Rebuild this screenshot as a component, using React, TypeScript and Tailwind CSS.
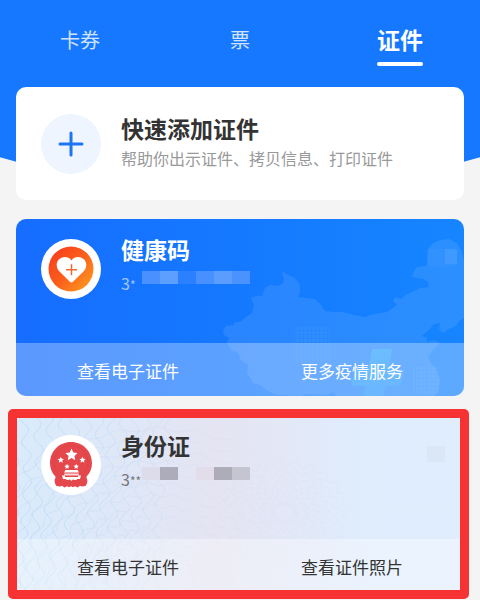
import type { ReactNode } from "react";

const HEALTH_MOSAIC = [
  "bg-[#4a91ff]",
  "bg-[#5c9fff]",
  "bg-[#2b80ff]",
  "bg-[#4890ff]",
  "bg-[#5a9dff]",
  "bg-[#4a93ff]",
];

const ID_MOSAIC = [
  "bg-[#dddcea]",
  "bg-[#adacba]",
  "bg-transparent",
  "bg-[#e3ddeb]",
  "bg-[#aeacb9]",
  "bg-[#c5c4d1]",
];

/** Wavy strands that run down the left part of the ID card. */
function strand(index: number) {
  const x = index * 12 - 24;
  let d = "";
  for (let y = -6; y <= 180; y += 3) {
    const t = y / 26 + index * 0.22;
    const saw = Math.abs((((t % 1) + 1) % 1) * 2 - 1);
    const eased = saw * saw * (3 - 2 * saw);
    const bend = Math.sin((y + index * 8) / 50) * 7;
    const px = x + bend + eased * 9;
    d += `${y === -6 ? "M" : "L"}${px.toFixed(1)} ${y}`;
  }
  return d;
}

/** Rippled ring round a centre point. */
function ring(cx: number, cy: number, radius: number, ripple: number, waves: number) {
  let d = "";
  for (let i = 0; i <= 240; i += 1) {
    const a = (i / 240) * Math.PI * 2;
    const r = radius + Math.sin(a * waves + radius / 14) * ripple;
    const px = cx + Math.cos(a) * r * 1.25;
    const py = cy + Math.sin(a) * r;
    d += `${i === 0 ? "M" : "L"}${px.toFixed(1)} ${py.toFixed(1)}`;
  }
  return d + "Z";
}

function range(n: number) {
  return Array.from({ length: n }, (_, i) => i);
}

function ChinaMap() {
  return (
    <svg
      className="absolute inset-0 h-full w-full"
      viewBox="0 0 448 177"
      preserveAspectRatio="xMaxYMax slice"
      aria-hidden="true"
    >
      <defs>
        <pattern id="dots" width="4" height="4" patternUnits="userSpaceOnUse">
          <rect width="3" height="3" fill="#5fc8ff" opacity="0.08" />
        </pattern>
        <linearGradient id="cross" x1="0" y1="0" x2="0.4" y2="1">
          <stop offset="0" stopColor="#2ea8ff" />
          <stop offset="1" stopColor="#2a9aff" />
        </linearGradient>
      </defs>
      <path
        fill="#ffffff"
        opacity="0.09"
        d="M207 111L210 107L217 106L219 103L224 103L230 98L236 94L238 86L235 79L240 77L246 77L249 69L254 66L262 67L267 64L268 60L266 52L272 56L279 59L284 66L284 73L282 78L290 79L299 80L305 86L309 92L318 93L327 93L338 96L349 98L358 95L371 93L378 88L381 86L377 82L379 78L385 80L391 75L404 69L413 68L412 63L407 60L396 58L398 52L401 48L411 47L412 30L417 24L424 21L433 20L441 24L446 33L448 41L448 99L443 102L440 107L433 110L427 114L423 110L424 104L418 105L413 111L406 117L411 119L411 123L418 121L424 124L418 130L412 138L415 144L419 148L422 155L424 161L423 170L419 177L320 177L317 173L310 176L291 175L285 177L262 176L252 172L244 166L237 164L231 154L232 146L225 141L222 134L215 131L211 123L213 119L208 116Z"
      />
      <rect x="411" y="30" width="30" height="17" fill="#fff" opacity="0.03" />
      <rect x="429" y="30" width="12" height="15" fill="#fff" opacity="0.07" />
      <rect x="278" y="107" width="36" height="36" fill="url(#dots)" />
      <rect x="397" y="148" width="26" height="28" fill="url(#dots)" />
      <path
        fill="url(#cross)"
        opacity="0.85"
        d="M356 130L376 130L373 149L388 151L385 167L370 167L367 177L347 177L350 167L335 166L339 151L353 149Z"
      />
    </svg>
  );
}

function Guilloche() {
  return (
    <svg
      className="absolute inset-0 h-full w-full"
      viewBox="0 0 448 177"
      preserveAspectRatio="xMinYMin slice"
      aria-hidden="true"
    >
      <defs>
        <linearGradient id="fade" x1="0" x2="1">
          <stop offset="0" stopColor="#fff" />
          <stop offset="0.3" stopColor="#fff" stopOpacity="0.5" />
          <stop offset="0.6" stopColor="#fff" stopOpacity="0" />
        </linearGradient>
        <mask id="leftFade">
          <rect width="448" height="177" fill="url(#fade)" />
        </mask>
      </defs>
      <g mask="url(#leftFade)" fill="none" strokeLinejoin="round">
        <g stroke="#a9d2f5" strokeWidth="1" opacity="0.5">
          {range(15).map((i) => (
            <path key={i} d={strand(i)} />
          ))}
        </g>
        <g stroke="#b4cdf0" strokeWidth="1" opacity="0.35">
          {range(12).map((i) => (
            <path key={i} d={ring(140, 165, 30 + i * 11, 2, 30)} />
          ))}
        </g>
      </g>
      <g fill="none" stroke="#cdcbe8" strokeWidth="1" opacity="0.12">
        {range(6).map((i) => (
          <path key={i} d={ring(268, 98, 10 + i * 8, 3, 24)} />
        ))}
      </g>
    </svg>
  );
}

function HeartIcon() {
  return (
    <svg className="h-[46px] w-[46px]" viewBox="0 0 46 46" aria-hidden="true">
      <defs>
        <linearGradient id="heat" x1="0.1" y1="0.1" x2="0.95" y2="0.9">
          <stop offset="0" stopColor="#f9401c" />
          <stop offset="0.5" stopColor="#fb5f1c" />
          <stop offset="1" stopColor="#fd9a1e" />
        </linearGradient>
      </defs>
      <circle cx="23" cy="23" r="22.5" fill="url(#heat)" />
      <path
        fill="#fff"
        d="M23.4 14.4C25.4 11.6 28.6 10.8 31.4 11.2C35.6 11.8 38.4 15 38.3 19C38.2 22 37 24 35 26L25.2 35.6C24 36.8 22.8 36.8 21.6 35.6L12 26C10 24 8.7 22 8.7 19C8.7 15 11.4 11.8 15.6 11.2C18.4 10.8 21.6 11.6 23.4 14.4Z"
      />
      <path stroke="#ee6a33" strokeWidth="1.5" d="M23.5 18.2V29.2M18 23.7H29" />
    </svg>
  );
}

function star(cx: number, cy: number, r: number) {
  return range(10)
    .map((i) => {
      const a = -Math.PI / 2 + (i * Math.PI) / 5;
      const q = i % 2 === 0 ? r : r * 0.48;
      return `${(cx + Math.cos(a) * q).toFixed(2)},${(cy + Math.sin(a) * q).toFixed(2)}`;
    })
    .join(" ");
}

function EmblemIcon() {
  return (
    <svg className="h-[46px] w-[46px]" viewBox="0 0 46 46" aria-hidden="true">
      <path
        fill="#e5484c"
        d="M23 0C35 0 44 9.4 44 21.2C44 26.5 42 31 38.6 34.5C37.8 36 39.6 37 39.4 39.2C39.2 41 38.6 42.6 37.4 44L34 44.6L32 43.8L29.5 45.4L27 44.2L25 45.2L23 44.2L21 45.2L19 44.2L16.5 45.4L14 43.8L12 44.6L8.6 44C7.4 42.6 6.8 41 6.6 39.2C6.4 37 8.2 36 7.4 34.5C4 31 2 26.5 2 21.2C2 9.4 11 0 23 0Z"
      />
      <circle cx="23" cy="20.5" r="17" fill="none" stroke="#dd4247" strokeWidth="1" />
      <g fill="#fff">
        <polygon points={star(23.5, 13, 6.4)} />
        <polygon points={star(12.8, 18, 3.3)} />
        <polygon points={star(34.5, 18, 3.3)} />
        <polygon points={star(19, 24.6, 2.8)} />
        <polygon points={star(28.2, 24.6, 2.8)} />
        <path d="M17.5 28H29.5L31 30.5H16Z" />
        <path d="M16.5 31.6H30.5L31 33.6H16Z" opacity="0.8" />
        <path d="M14 33.6H17V35H30V33.6H33L32 37H29.5L28 38H26L25 37.2L23.5 39L22 37.2L21 38H19L17.5 37H15Z" />
      </g>
    </svg>
  );
}

function Badge({ children, tint }: { children: ReactNode; tint: string }) {
  return (
    <div className={`flex h-[60px] w-[60px] shrink-0 items-center justify-center rounded-full ${tint}`}>
      {children}
    </div>
  );
}

type CardProps = {
  title: string;
  stars: string;
  digitsColor: string;
  mosaic: string[];
  icon: ReactNode;
  art: ReactNode;
  surface: string;
  footer: string;
  titleColor: string;
  actions: string[];
};

function DocumentCard(p: CardProps) {
  return (
    <article className={`relative overflow-hidden rounded-[10px] ${p.surface}`}>
      {p.art}
      <div className="relative flex h-[124px] gap-5 pt-5 pl-[25px]">
        <Badge tint="bg-white">{p.icon}</Badge>
        <div>
          <h2 className={`-mt-0.5 text-[23px] leading-[24px] font-bold ${p.titleColor}`}>{p.title}</h2>
          <div className="mt-2.5 flex items-start">
            <span className={`w-[21px] text-[16px] leading-[24px] whitespace-nowrap ${p.digitsColor}`}>
              3<span className="text-[12px]">{p.stars}</span>
            </span>
            {p.mosaic.map((tone, i) => (
              <span key={i} className={`h-[13px] w-[18px] ${tone}`} />
            ))}
          </div>
        </div>
      </div>
      <div className={`relative grid h-[53px] grid-cols-2 ${p.footer}`}>
        {p.actions.map((label) => (
          <button key={label} type="button" className="pt-0.5 text-center text-[17px] leading-[24px]">
            {label}
          </button>
        ))}
      </div>
    </article>
  );
}

export default function App() {
  return (
    <div className="min-h-screen bg-[#f4f4f4] pb-2 font-['Noto_Sans_CJK_SC','Liberation_Sans',sans-serif]">
      <header className="h-[189px] bg-[#1677ff] pt-[23px] [clip-path:ellipse(90%_100%_at_50%_0)]">
        <nav className="grid grid-cols-3 text-white">
          <a href="#coupons" className="text-center text-[20px] leading-[34px] text-white/80">
            卡券
          </a>
          <a href="#tickets" className="text-center text-[20px] leading-[34px] text-white/80">
            票
          </a>
          <a
            href="#documents"
            aria-current="page"
            className="flex flex-col items-center text-[23px] leading-[32px] font-bold"
          >
            证件
            <span className="mt-[7px] h-[4px] w-[46px] rounded-full bg-white" />
          </a>
        </nav>
      </header>

      <main className="relative -mt-[102px] px-4">
        <button
          type="button"
          className="flex h-[113px] w-full items-center gap-5 rounded-[10px] bg-white pl-[25px] text-left"
        >
          <Badge tint="bg-[#eff5ff]">
            <svg className="h-[26px] w-[26px]" viewBox="0 0 26 26" aria-hidden="true">
              <path d="M13 2V24M2 13H24" stroke="#1d74f5" strokeWidth="3" strokeLinecap="round" />
            </svg>
          </Badge>
          <span className="flex flex-col pb-1">
            <span className="text-[23px] leading-[32px] font-bold text-[#333333]">快速添加证件</span>
            <span className="text-[16px] leading-[28px] text-[#999999]">
              帮助你出示证件、拷贝信息、打印证件
            </span>
          </span>
        </button>

        <div className="mt-[19px]">
          <DocumentCard
            title="健康码"
            stars="*"
            digitsColor="text-white/60"
            mosaic={HEALTH_MOSAIC}
            icon={<HeartIcon />}
            art={<ChinaMap />}
            surface="bg-linear-to-r from-[#166dff] to-[#1685ff]"
            footer="bg-white/30 text-white"
            titleColor="text-white"
            actions={["查看电子证件", "更多疫情服务"]}
          />
        </div>

        <div className="relative mt-[19px]">
          <DocumentCard
            title="身份证"
            stars="**"
            digitsColor="text-[#77777f]"
            mosaic={ID_MOSAIC}
            icon={<EmblemIcon />}
            art={
              <>
                <Guilloche />
                <span className="absolute top-[31px] right-[19px] h-4 w-[18px] bg-[#dbe7f6]" />
              </>
            }
            surface="bg-linear-to-r from-[#d9ebfc] via-[#e5e4f2] via-45% to-[#dfedfd] to-80%"
            footer="bg-white/35 text-[#333333]"
            titleColor="text-[#333333]"
            actions={["查看电子证件", "查看证件照片"]}
          />
          <div className="pointer-events-none absolute -top-[6px] -right-[5px] -bottom-[7px] -left-2 rounded-[5px] border-[9px] border-[#f73232]" />
        </div>
      </main>
    </div>
  );
}
